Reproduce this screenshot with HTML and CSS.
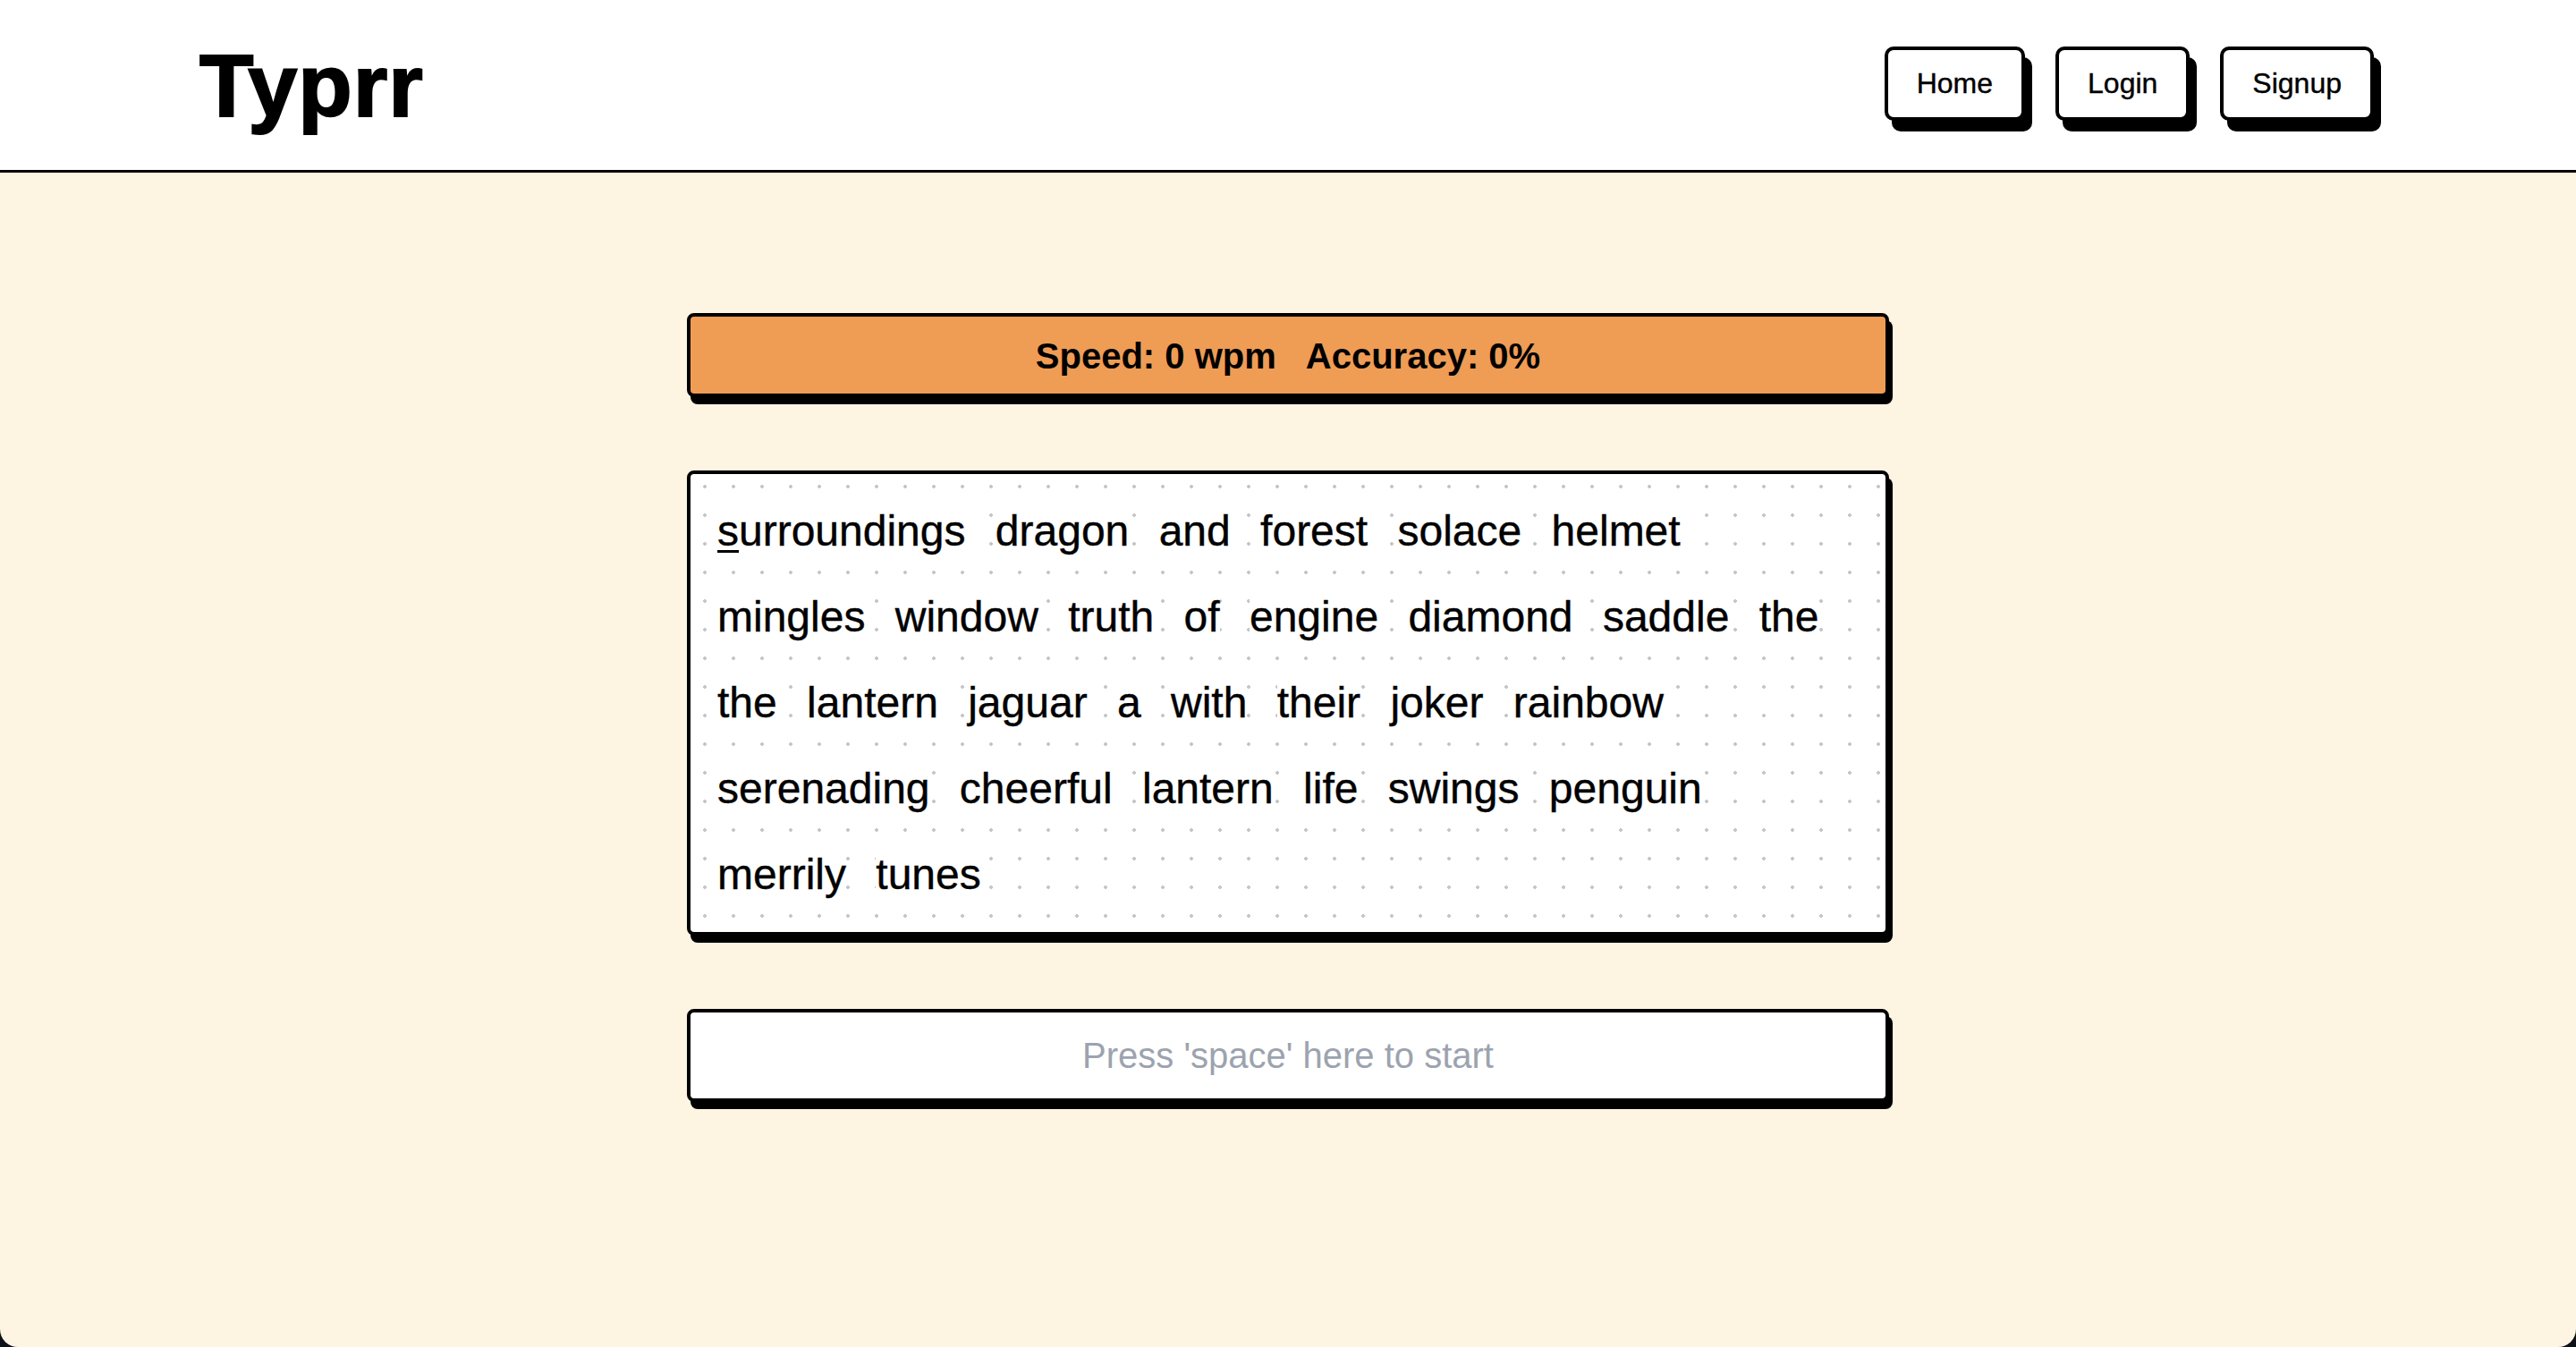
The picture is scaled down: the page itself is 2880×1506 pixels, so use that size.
FILE: index.html
```html
<!DOCTYPE html>
<html lang="en">
<head>
<meta charset="utf-8">
<title>Typrr</title>
<link rel="stylesheet" href="styles.css">
</head>
<body>
<div class="app">
  <header class="topbar">
    <div class="logo">Typrr</div>
    <nav class="nav">
      <a class="nav-btn" href="#">Home</a>
      <a class="nav-btn" href="#">Login</a>
      <a class="nav-btn" href="#">Signup</a>
    </nav>
  </header>
  <main class="main">
    <div class="panel stats">
      <span>Speed: 0 wpm</span>
      <span>Accuracy: 0%</span>
    </div>
    <div class="panel words">
      <div class="line"><span class="word"><span class="cursor">s</span>urroundings</span> <span class="word">dragon</span> <span class="word">and</span> <span class="word">forest</span> <span class="word">solace</span> <span class="word">helmet</span></div>
      <div class="line"><span class="word">mingles</span> <span class="word">window</span> <span class="word">truth</span> <span class="word">of</span> <span class="word">engine</span> <span class="word">diamond</span> <span class="word">saddle</span> <span class="word">the</span></div>
      <div class="line"><span class="word">the</span> <span class="word">lantern</span> <span class="word">jaguar</span> <span class="word">a</span> <span class="word">with</span> <span class="word">their</span> <span class="word">joker</span> <span class="word">rainbow</span></div>
      <div class="line"><span class="word">serenading</span> <span class="word">cheerful</span> <span class="word">lantern</span> <span class="word">life</span> <span class="word">swings</span> <span class="word">penguin</span></div>
      <div class="line"><span class="word">merrily</span> <span class="word">tunes</span></div>
    </div>
    <input class="panel type-input" type="text" placeholder="Press 'space' here to start">
  </main>
</div>
</body>
</html>
```

FILE: styles.css
```css
html {
  background: #0e1117;
}
body {
  margin: 0;
  font-family: "Liberation Sans", Arial, sans-serif;
  color: #000;
}
.app {
  height: 1506px;
  background: #fdf4e2;
  border-radius: 0 0 20px 20px;
  overflow: hidden;
  display: flex;
  flex-direction: column;
}
.topbar {
  height: 190px;
  flex: none;
  background: #fff;
  border-bottom: 3px solid #000;
  display: flex;
  align-items: center;
  justify-content: space-between;
  padding: 0 226px 0 223px;
}
.logo {
  font-size: 99px;
  font-weight: 700;
  line-height: 1;
  letter-spacing: 1px;
  -webkit-text-stroke: 2px #000;
}
.nav {
  display: flex;
  gap: 34px;
  margin-top: -4px;
}
.nav-btn {
  display: block;
  font-size: 32px;
  line-height: 37px;
  padding: 19px 32px;
  color: #000;
  text-decoration: none;
  background: #fff;
  border: 4px solid #000;
  border-radius: 10px;
  box-shadow: 8px 12px 0 0 #000;
  -webkit-text-stroke: 0.4px #000;
}
.main {
  width: 1344px;
  margin: 157px auto 0;
  display: flex;
  flex-direction: column;
  gap: 82px;
}
.panel {
  border: 4px solid #000;
  border-radius: 8px;
  box-shadow: 4px 8px 0 0 #000;
  box-sizing: border-box;
}
.stats {
  background: #ef9c55;
  display: flex;
  justify-content: center;
  gap: 33px;
  font-size: 40px;
  font-weight: 700;
  line-height: 46px;
  padding: 21px 20px 19px;
}
.words {
  background-color: #fff;
  background-image: radial-gradient(circle, #c6c6c6 1.6px, transparent 2.2px);
  background-size: 32px 32px;
  background-position: 0 -2px;
  padding: 16px 30px;
  font-size: 48px;
  line-height: 96px;
  word-spacing: 20px;
  color: #000;
}
.line {
  white-space: nowrap;
}
.word {
  background: #fff;
  word-spacing: normal;
  -webkit-text-stroke: 0.4px #000;
}
.cursor {
  text-decoration: underline;
  text-decoration-thickness: 3px;
  text-underline-offset: 5px;
}
.type-input {
  display: block;
  width: 100%;
  height: 104px;
  background: #fff;
  font-family: "Liberation Sans", Arial, sans-serif;
  font-size: 40px;
  text-align: center;
  padding: 0 24px;
  outline: none;
  color: #000;
}
.type-input::placeholder {
  color: #9ca3af;
}
```
